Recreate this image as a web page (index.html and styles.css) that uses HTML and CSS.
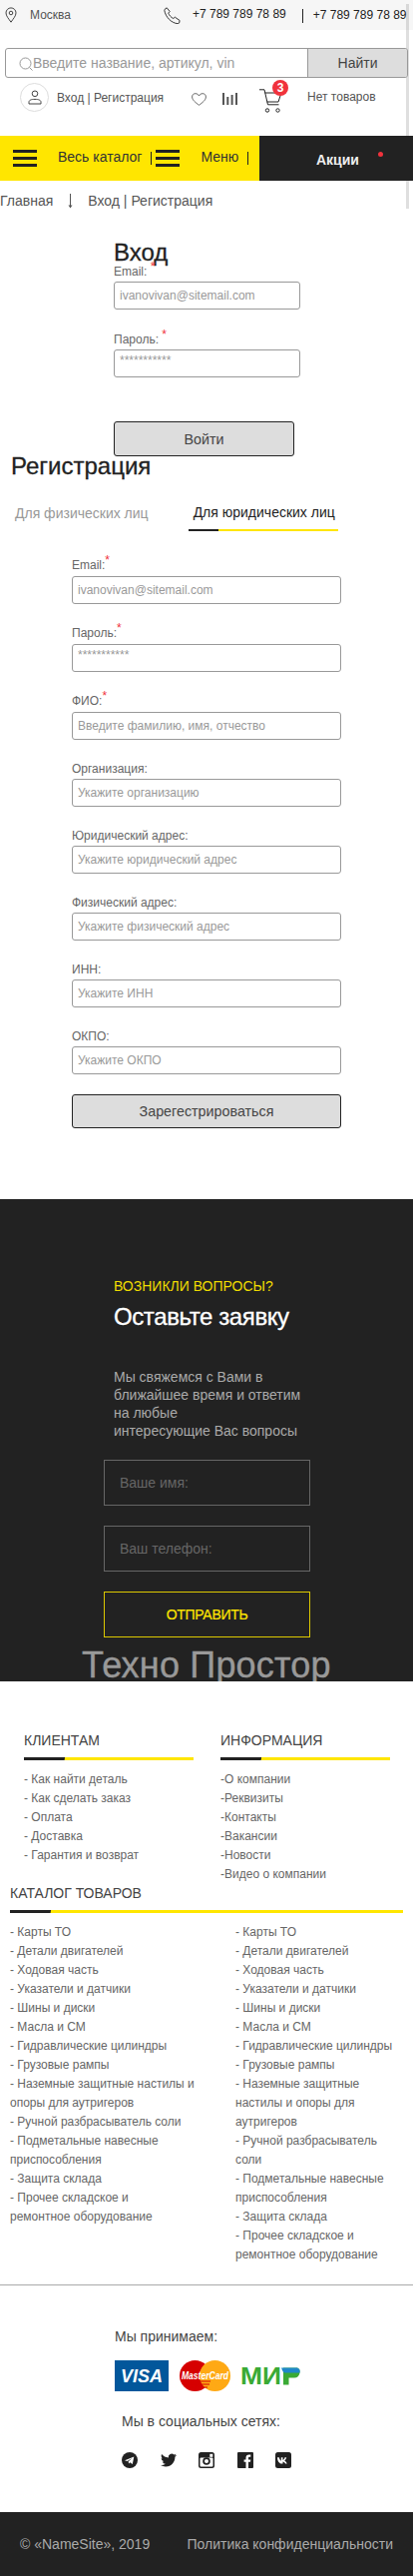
FILE: index.html
```html
<!DOCTYPE html>
<html lang="ru">
<head>
<meta charset="utf-8">
<title>Вход | Регистрация</title>
<link rel="stylesheet" href="styles.css">
</head>
<body>
<div class="page">
<div class="strip"></div>
<header>
  <div class="topbar">
    <svg class="ic-pin" viewBox="0 0 12 16" fill="none" stroke="#444" stroke-width="1"><path d="M6 15.2C3.6 11.6 1 9 1 5.9a5 5 0 0 1 10 0C11 9 8.400 11.600 6 15.200z"/><circle cx="6" cy="6" r="1.800"/></svg>
    <span class="city">Москва</span>
    <svg class="ic-phone" viewBox="0 0 17 17" fill="none" stroke="#333" stroke-width="1"><path d="M1 2.500 3.200.8l3 3.700-1.500 1.600c.8 2 2.600 4.300 5 5.400l1.700-1.300 4.700 3.300-.5 2.500c-.2.500-.7.700-1.500.7C7.500 16 2 10 .8 3.400 .7 3 .8 2.700 1 2.500z"/></svg>
    <a class="phone">+7 789 789 78 89</a>
    <span class="phone-sep"></span>
    <a class="phone phone-2">+7 789 789 78 89</a>
  </div>
  <form class="search">
    <svg class="ic-search" viewBox="0 0 14 14" fill="none" stroke="#999" stroke-width="1"><circle cx="6.500" cy="6.500" r="5.500"/><path d="m10.500 10.500 3 3"/></svg>
    <input class="search-input" type="text" placeholder="Введите название, артикул, vin">
    <button class="search-btn" type="button">Найти</button>
  </form>
  <div class="userbar">
    <span class="avatar">
      <svg viewBox="0 0 14 15" fill="none" stroke="#444" stroke-width="1"><circle cx="7" cy="3.800" r="2.800"/><path d="M1 14v-1.800c0-1.800 2-2.800 6-2.800s6 1 6 2.800V14z"/></svg>
    </span>
    <a class="auth">Вход | Регистрация</a>
    <svg class="ic-heart" viewBox="0 0 15 13" fill="none" stroke="#444" stroke-width=".8"><path d="M7.500 12.300C4 9.600.6 7.200.6 4 .6 2 2 .7 3.900.7c1.500 0 2.800.8 3.600 2.200C8.300 1.500 9.600.7 11.100.7 13 .7 14.400 2 14.400 4c0 3.200-3.400 5.600-6.900 8.300z"/></svg>
    <svg class="ic-bars" viewBox="0 0 15 12" fill="#555"><rect x="0" y="0" width="2" height="12"/><rect x="4.300" y="4" width="2" height="8"/><rect x="8.600" y="2" width="2" height="10"/><rect x="13" y="0" width="2" height="12"/></svg>
    <span class="cart">
      <svg viewBox="0 0 23 24" fill="none" stroke="#222" stroke-width="1"><path d="M0 .8h5l3.500 15h11"/><path d="M5.500 4H22l-3 9H7.600"/><circle cx="8" cy="21.500" r="1.700"/><circle cx="18.500" cy="21.500" r="1.700"/></svg>
      <b class="badge">3</b>
    </span>
    <span class="cart-empty">Нет товаров</span>
  </div>
  <nav class="nav">
    <div class="nav-main">
      <span class="burger burger-1"><i></i><i></i><i></i></span>
      <a class="nav-link nav-catalog">Весь каталог</a>
      <span class="nav-sep"></span>
      <span class="burger"><i></i><i></i><i></i></span>
      <a class="nav-link nav-menu">Меню</a>
      <span class="nav-sep nav-sep-2"></span>
    </div>
    <div class="nav-promo">
      <a class="promo">Акции</a>
      <span class="promo-dot"></span>
    </div>
  </nav>
  <div class="crumbs">
    <a>Главная</a>
    <svg class="ic-down" viewBox="0 0 7 15" fill="none" stroke="#555" stroke-width="1"><path d="M3.500 0v14"/><path d="M1.500 11.500 3.500 14.500 5.500 11.500z" fill="#555" stroke="none"/></svg>
    <a>Вход | Регистрация</a>
  </div>
</header>

<main>
  <section class="login">
    <h1 class="login-title">Вход</h1>
    <div class="field field-login">
      <label class="lbl">Email: <sup class="req">*</sup></label>
      <input class="inp" type="text" placeholder="ivanovivan@sitemail.com">
    </div>
    <div class="field field-login">
      <label class="lbl">Пароль: <sup class="req">*</sup></label>
      <input class="inp inp-pass" type="text" placeholder="***********">
    </div>
    <button class="btn btn-login" type="button">Войти</button>
  </section>

  <section class="register">
    <h2 class="reg-title">Регистрация</h2>
    <div class="tabs">
      <a class="tab">Для физических лиц</a>
      <a class="tab tab-active">Для юридических лиц</a>
    </div>
    <form class="reg-form">
      <div class="field field-req"><label class="lbl">Email:<sup class="req">*</sup></label><input class="inp" type="text" placeholder="ivanovivan@sitemail.com"></div>
      <div class="field field-req"><label class="lbl">Пароль:<sup class="req">*</sup></label><input class="inp inp-pass" type="text" placeholder="***********"></div>
      <div class="field field-req"><label class="lbl">ФИО:<sup class="req">*</sup></label><input class="inp" type="text" placeholder="Введите фамилию, имя, отчество"></div>
      <div class="field"><label class="lbl">Организация:</label><input class="inp" type="text" placeholder="Укажите организацию"></div>
      <div class="field"><label class="lbl">Юридический адрес:</label><input class="inp" type="text" placeholder="Укажите юридический адрес"></div>
      <div class="field"><label class="lbl">Физический адрес:</label><input class="inp" type="text" placeholder="Укажите физический адрес"></div>
      <div class="field"><label class="lbl">ИНН:</label><input class="inp" type="text" placeholder="Укажите ИНН"></div>
      <div class="field field-last"><label class="lbl">ОКПО:</label><input class="inp" type="text" placeholder="Укажите ОКПО"></div>
      <button class="btn btn-reg" type="button">Зарегестрироваться</button>
    </form>
  </section>

  <section class="ask">
    <p class="ask-kicker">ВОЗНИКЛИ ВОПРОСЫ?</p>
    <h2 class="ask-title">Оставьте заявку</h2>
    <p class="ask-text">Мы свяжемся с Вами в<br>ближайшее время и ответим<br>на любые<br>интересующие Вас вопросы</p>
    <input class="ask-inp" type="text" placeholder="Ваше имя:">
    <input class="ask-inp" type="text" placeholder="Ваш телефон:">
    <button class="ask-btn" type="button">ОТПРАВИТЬ</button>
    <div class="brand">Техно Простор</div>
  </section>
</main>

<footer>
  <div class="f-cols">
    <div class="f-col">
      <h3 class="f-head">КЛИЕНТАМ</h3>
      <ul class="f-list">
        <li>- Как найти деталь</li>
        <li>- Как сделать заказ</li>
        <li>- Оплата</li>
        <li>- Доставка</li>
        <li>- Гарантия и возврат</li>
      </ul>
    </div>
    <div class="f-col">
      <h3 class="f-head">ИНФОРМАЦИЯ</h3>
      <ul class="f-list">
        <li>-О компании</li>
        <li>-Реквизиты</li>
        <li>-Контакты</li>
        <li>-Вакансии</li>
        <li>-Новости</li>
        <li>-Видео о компании</li>
      </ul>
    </div>
  </div>
  <div class="f-catalog">
    <h3 class="f-head">КАТАЛОГ ТОВАРОВ</h3>
    <div class="f-cat-cols">
      <ul class="f-list f-list-l">
        <li>- Карты ТО</li>
        <li>- Детали двигателей</li>
        <li>- Ходовая часть</li>
        <li>- Указатели и датчики</li>
        <li>- Шины и диски</li>
        <li>- Масла и СМ</li>
        <li>- Гидравлические цилиндры</li>
        <li>- Грузовые рампы</li>
        <li>- Наземные защитные настилы и опоры для аутригеров</li>
        <li>- Ручной разбрасыватель соли</li>
        <li>- Подметальные навесные приспособления</li>
        <li>- Защита склада</li>
        <li>- Прочее складское и<br>ремонтное оборудование</li>
      </ul>
      <ul class="f-list f-list-r">
        <li>- Карты ТО</li>
        <li>- Детали двигателей</li>
        <li>- Ходовая часть</li>
        <li>- Указатели и датчики</li>
        <li>- Шины и диски</li>
        <li>- Масла и СМ</li>
        <li>- Гидравлические цилиндры</li>
        <li>- Грузовые рампы</li>
        <li>- Наземные защитные настилы и опоры для аутригеров</li>
        <li>- Ручной разбрасыватель соли</li>
        <li>- Подметальные навесные приспособления</li>
        <li>- Защита склада</li>
        <li>- Прочее складское и ремонтное оборудование</li>
      </ul>
    </div>
  </div>
  <div class="f-pay">
    <p class="pay-title">Мы принимаем:</p>
    <div class="pay-logos">
      <svg class="logo-visa" viewBox="0 0 54 31"><rect width="54" height="31" fill="#02579b"/><text x="27" y="22" text-anchor="middle" class="visa-t">VISA</text></svg>
      <svg class="logo-mc" viewBox="0 0 51 31"><circle cx="15.500" cy="15.500" r="15.500" fill="#d60000"/><circle cx="35.500" cy="15.500" r="15.500" fill="#ffa914"/><path d="M20 21h11M21 24h9M23 27h5" stroke="#d60000" stroke-width="1"/><text x="25.500" y="19" text-anchor="middle" textLength="47" lengthAdjust="spacingAndGlyphs" class="mc-t">MasterCard</text></svg>
      <svg class="logo-mir" viewBox="0 0 60 18"><text x="0" y="17" textLength="41" lengthAdjust="spacingAndGlyphs" class="mir-t" fill="#3aaa35">МИ</text><path d="M43 .5h13c3 0 4 2.500 3.500 5-.5 3-2.500 5-5.500 5h-5.500V17.500H43z" fill="#3aaa35"/><path d="M41 .5h15c3 0 4 2.500 3.500 5H45C43 5.500 42 3.500 41 .5z" fill="#1f88c9"/></svg>
    </div>
    <p class="soc-title">Мы в социальных сетях:</p>
    <div class="soc">
      <svg viewBox="0 0 16 16"><circle cx="8" cy="8" r="8" fill="#222"/><path d="M3 8.200 12.300 4.400 10.800 12 8.300 10.200 7 11.500 6.700 9.300 10.500 6 5.500 8.900z" fill="#fff"/></svg>
      <svg viewBox="0 0 24 24"><path fill="#222" d="M23.953 4.570a10 10 0 01-2.825.775 4.958 4.958 0 002.163-2.723c-.951.555-2.005.959-3.127 1.184a4.920 4.920 0 00-8.384 4.482C7.690 8.095 4.067 6.130 1.640 3.162a4.822 4.822 0 00-.666 2.475c0 1.710.870 3.213 2.188 4.096a4.904 4.904 0 01-2.228-.616v.060a4.923 4.923 0 003.946 4.827 4.996 4.996 0 01-2.212.085 4.936 4.936 0 004.604 3.417 9.867 9.867 0 01-6.102 2.105c-.390 0-.779-.023-1.170-.067a13.995 13.995 0 007.557 2.209c9.053 0 13.998-7.496 13.998-13.985 0-.210 0-.420-.015-.630A9.935 9.935 0 0024 4.590z"/></svg>
      <svg viewBox="0 0 16 16"><rect width="16" height="16" rx="2.500" fill="#222"/><rect x="1.500" y="5.500" width="13" height="9" rx="1" fill="#fff"/><circle cx="8" cy="9" r="3.800" fill="#222"/><circle cx="8" cy="9" r="2" fill="#fff"/><rect x="11.300" y="1.800" width="3" height="3" fill="#fff"/></svg>
      <svg viewBox="0 0 16 16"><rect width="16" height="16" rx="1" fill="#222"/><path d="M8.500 16V9.800H6.600V7.400h1.900V5.700c0-2.100 1.200-3.200 3.100-3.200h1.700v2.300h-1.200c-.9 0-1.100.5-1.100 1.100v1.500h2.300l-.3 2.400h-2V16z" fill="#fff"/></svg>
      <svg viewBox="0 0 16 16"><rect width="16" height="16" rx="2.500" fill="#222"/><path d="M2 5.300h1.800c.4 1.800 1.300 3.300 2 3.500V5.300h1.700v2.600c.8-.1 1.600-1.200 2-2.600h1.700c-.3 1.600-1.300 2.800-2 3.300.8.400 2 1.400 2.500 3H10c-.4-1.200-1.400-2.100-2.500-2.200v2.200h-.6C4 11.600 2.200 9.300 2 5.300z" fill="#fff"/></svg>
    </div>
  </div>
  <div class="f-bottom">
    <span>© «NameSite», 2019</span>
    <a>Политика конфиденциальности</a>
  </div>
</footer>
</div>
</body>
</html>
```
FILE: styles.css
```css
* { box-sizing: border-box; }
html, body { margin: 0; padding: 0; }
body { font-family: "Liberation Sans", Arial, sans-serif; color: #333; background: #fff; }
.page { position: relative; width: 414px; height: 2580px; overflow: hidden; }
a { color: inherit; text-decoration: none; }
h1, h2, h3, p, ul { margin: 0; padding: 0; font-weight: 400; }
ul { list-style: none; }
svg { display: block; flex: none; }
.strip { position: absolute; left: 407px; top: 4px; width: 3px; height: 205px; background: rgba(128,128,128,.25); }

.topbar { display: flex; align-items: center; height: 30px; background: #f6f6f6; padding-left: 5px; font-size: 12px; }
.ic-pin { width: 12px; height: 16px; }
.city { margin-left: 13px; color: #555; }
.ic-phone { width: 17px; height: 17px; margin-left: 93px; }
.phone { margin-left: 12px; color: #222; margin-top: -2px; white-space: nowrap; }
.phone-2 { margin-left: 10px; margin-top: 0; }
.phone-sep { width: 1px; height: 14px; background: #222; margin-left: 16px; margin-top: 2px; }

.search { position: relative; display: flex; margin: 18px 5px 0; height: 30px; border: 1px solid #999; border-radius: 3px; overflow: hidden; }
.ic-search { position: absolute; left: 13px; top: 8px; width: 14px; height: 14px; }
.search-input { flex: 1; min-width: 0; border: 0; padding: 0 0 0 27px; font: 14px "Liberation Sans", Arial, sans-serif; outline: none; background: transparent; }
.search-input::placeholder { color: #999; opacity: 1; }
.search-btn { width: 100px; border: 0; border-left: 1px solid #999; background: #ddd; font: 14px "Liberation Sans", Arial, sans-serif; color: #444; padding: 0; }

.userbar { display: flex; align-items: center; height: 29px; margin-top: 5px; padding-left: 20px; font-size: 12px; color: #555; }
.avatar { display: flex; align-items: center; justify-content: center; width: 29px; height: 29px; border: 1px solid #ddd; border-radius: 50%; }
.avatar svg { width: 14px; height: 15px; }
.auth { margin-left: 8px; }
.ic-heart { width: 15px; height: 13px; margin-left: 28px; margin-top: 4px; }
.ic-bars { width: 15px; height: 12px; margin-left: 16px; margin-top: 3px; }
.cart { position: relative; width: 23px; height: 24px; margin-left: 22px; margin-top: 7px; }
.cart svg { width: 23px; height: 24px; }
.badge { position: absolute; left: 13px; top: -9px; width: 16px; height: 16px; border-radius: 50%; background: #f0323c; color: #fff; font-size: 12px; font-weight: 700; line-height: 16px; text-align: center; }
.cart-empty { margin-left: 25px; margin-top: -2px; }

.nav { display: flex; height: 45px; margin-top: 24px; }
.nav-main { display: flex; align-items: center; width: 260px; background: #ffe600; }
.nav-promo { position: relative; flex: 1; background: #222; display: flex; align-items: center; }
.burger { display: flex; flex-direction: column; justify-content: space-between; width: 24px; height: 17px; }
.burger i { display: block; height: 3px; background: #222; }
.burger-1 { margin-left: 13px; }
.nav-link { font-size: 14px; color: #333; margin-top: -3px; }
.nav-catalog { margin-left: 21px; }
.nav-menu { margin-left: 21px; }
.nav-sep { width: 1px; height: 13px; background: #222; margin: 0 4px 0 9px; }
.nav-sep-2 { margin-left: 9px; }
.promo { margin-left: 57px; color: #eee; font-size: 14px; font-weight: 700; margin-top: 3px; }
.promo-dot { position: absolute; left: 119px; top: 16px; width: 5px; height: 5px; border-radius: 50%; background: #f0323c; }

.crumbs { display: flex; align-items: center; height: 40px; font-size: 14px; color: #555; }
.ic-down { width: 7px; height: 15px; margin: 0 14px; }

.login { padding: 20px 0 0 114px; }
.login-title { font-size: 24px; line-height: 24px; color: #222; margin-bottom: -1px; -webkit-text-stroke: .3px #222; }
.field { display: block; }
.lbl { display: block; font-size: 12px; line-height: 16px; color: #666; height: 18px; white-space: nowrap; }
.req { color: #f0323c; font-size: 12px; line-height: 0; }
.inp { display: block; width: 100%; height: 28px; border: 1px solid #999; border-radius: 3px; padding: 0 5px; font: 12px "Liberation Sans", Arial, sans-serif; outline: none; background: #fff; }
.inp::placeholder { color: #999; opacity: 1; }
.inp-pass { padding-bottom: 6px; }
.field-login { width: 187px; margin-bottom: 22px; }
.btn { display: block; border: 1px solid #222; border-radius: 3px; background: #ddd; font: 14.300px "Liberation Sans", Arial, sans-serif; color: #444; padding: 0; }
.btn-login { width: 181px; height: 35px; margin-top: 44px; }

.reg-title { font-size: 24px; line-height: 24px; color: #222; margin: -2px 0 0 11px; -webkit-text-stroke: .3px #222; }
.tabs { display: flex; height: 32px; margin-top: 23px; padding-left: 15px; font-size: 14px; }
.tab { color: #999; line-height: 24px; height: 28px; }
.tab-active { color: #222; margin-left: 40px; padding-left: 5px; width: 150px; height: 30px; line-height: 23px; background: linear-gradient(90deg, #222 30px, #ffe600 30px) bottom / 100% 2px no-repeat; }
.reg-form { width: 270px; margin: 24px 0 0 72px; }
.reg-form .field { margin-bottom: 21px; }
.reg-form .field-req .lbl { height: 19px; }
.reg-form .field-last { margin-bottom: 20px; }
.btn-reg { width: 270px; height: 34px; }

.ask { position: relative; height: 483px; margin-top: 71px; background: #222; overflow: hidden; padding: 79px 0 0 114px; }
.ask-kicker { font-size: 14px; line-height: 16px; color: #f0dc00; }
.ask-title { font-size: 24px; line-height: 28px; color: #fff; margin-top: 9px; letter-spacing: -.4px; -webkit-text-stroke: .3px #fff; }
.ask-text { font-size: 14px; line-height: 18px; color: #aaa; margin-top: 37px; }
.ask-inp { display: block; width: 207px; height: 46px; margin: 20px 0 0 -10px; background: transparent; border: 1px solid #666; padding: 0 15px; font: 14px "Liberation Sans", Arial, sans-serif; color: #999; outline: none; }
.ask-inp::placeholder { color: #666; opacity: 1; }
.ask-btn { display: block; width: 207px; height: 46px; margin: 20px 0 0 -10px; background: transparent; border: 1px solid #dcc800; color: #ffe600; font: 14px "Liberation Sans", Arial, sans-serif; letter-spacing: -.3px; padding: 0; -webkit-text-stroke: .2px #ffe600; }
.brand { font-size: 36px; line-height: 40px; color: #999; white-space: nowrap; margin: 8px 0 0 -32px; letter-spacing: .2px; -webkit-text-stroke: .4px #999; }

.f-cols { display: flex; padding: 49px 0 0 24px; margin-bottom: -1px; }
.f-col { width: 170px; }
.f-col + .f-col { margin-left: 27px; }
.f-head { font-size: 14px; line-height: 20px; color: #444; height: 30px; background: linear-gradient(100deg, #222 40px, #ffe600 41px) bottom / 100% 3px no-repeat; }
.f-list { margin-top: 10px; font-size: 12px; line-height: 19px; color: #666; }
.f-catalog { margin: 0 10px; }
.f-cat-cols { display: flex; }
.f-list-l { width: 200px; }
.f-list-r { width: 160px; margin-left: 26px; }
.f-pay { border-top: 1px solid #aaa; margin-top: 20px; height: 228px; padding: 43px 0 0 115px; font-size: 14px; color: #444; }
.pay-title { line-height: 16px; }
.pay-logos { display: flex; align-items: center; margin-top: 16px; }
.logo-visa { width: 54px; height: 31px; }
.logo-mc { width: 51px; height: 31px; margin-left: 11px; }
.logo-mir { width: 60px; height: 18px; margin-left: 10px; }
.visa-t { font: italic 700 18px "Liberation Sans", Arial, sans-serif; fill: #fff; }
.mc-t { font: italic 700 10px "Liberation Sans", Arial, sans-serif; fill: #fff; }
.mir-t { font: 700 23px "Liberation Sans", Arial, sans-serif; }
.soc-title { line-height: 16px; margin: 22px 0 0 7px; }
.soc { display: flex; gap: 22.500px; margin: 23px 0 0 7px; }
.soc svg { width: 16px; height: 16px; }
.f-bottom { display: flex; justify-content: space-between; align-items: center; height: 64px; background: #222; padding: 0 20px; font-size: 14px; color: #aaa; }
```
